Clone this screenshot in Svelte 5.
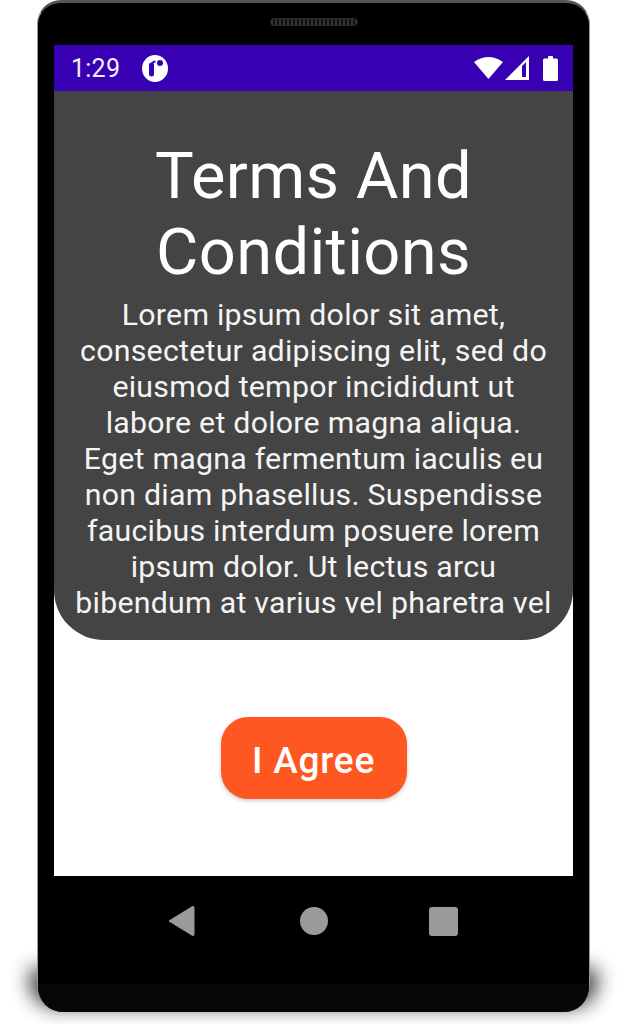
<script>
  const body =
    'Lorem ipsum dolor sit amet, consectetur adipiscing elit, sed do eiusmod tempor incididunt ut labore et dolore magna aliqua. Eget magna fermentum iaculis eu non diam phasellus. Suspendisse faucibus interdum posuere lorem ipsum dolor. Ut lectus arcu bibendum at varius vel pharetra vel'
</script>

<div class="page">
  <div class="phone">
    <div class="shadow"></div>
    <div class="bezel-top">
      <div class="speaker"></div>
    </div>

    <main class="screen">
      <header class="status">
        <span class="time">1:29</span>
        <svg class="app-dot" width="26" height="27" viewBox="0 0 26 27">
          <ellipse cx="13" cy="13.500" rx="13" ry="13.500" fill="#fff" />
          <path d="M9.500 19V10.500a4 4 0 0 1 4-4" fill="none" stroke="#3700b3" stroke-width="2" />
          <path d="M9.500 19V10" fill="none" stroke="#3700b3" stroke-width="5" stroke-linecap="round" />
          <circle cx="18" cy="8" r="3" fill="#3700b3" />
        </svg>
        <span class="spacer"></span>
        <svg width="55" height="26" viewBox="0 0 55 26">
          <path d="M0 7Q14.500-3 29 7L14.500 24Z" fill="#fff" />
          <path d="M31 25 55 1V25ZM48 22H52V7L48 11Z" fill="#fff" fill-rule="evenodd" />
        </svg>
        <svg class="battery" width="15" height="25" viewBox="0 0 15 25">
          <path d="M5 1a1 1 0 0 1 1-1h3a1 1 0 0 1 1 1v1.500h3.500A1.500 1.500 0 0 1 15 4V23.500A1.500 1.500 0 0 1 13.500 25h-12A1.500 1.500 0 0 1 0 23.500V4A1.500 1.500 0 0 1 1.500 2.500H5Z" fill="#fff" />
        </svg>
      </header>

      <section class="terms">
        <h1>Terms And Conditions</h1>
        <p>{body}</p>
      </section>

      <div class="actions">
        <button type="button">I Agree</button>
      </div>
    </main>

    <nav class="nav-bar">
      <svg width="30" height="32" viewBox="0 0 30 32">
        <path d="M2 16 25.500 1.500a1 1 0 0 1 1.500 1v27a1 1 0 0 1-1.500 1Z" fill="#9a9a9a" stroke="#9a9a9a" stroke-width="1" stroke-linejoin="round" />
      </svg>
      <span class="nav-circle"></span>
      <span class="nav-square"></span>
    </nav>

    <div class="chin"></div>
  </div>
</div>

<style>
  :global(body) {
    margin: 0;
    background: #fff;
  }

  .page {
    height: 1024px;
    overflow: hidden;
    padding: 0 37px;
    box-sizing: border-box;
    font-family: Roboto, 'Liberation Sans', sans-serif;
    isolation: isolate;
  }

  .phone {
    position: relative;
    width: 553px;
    height: 1012px;
    box-sizing: border-box;
    padding: 0 16px;
    display: flex;
    flex-direction: column;
    background: #000;
    border: 1px solid #999;
    border-top: 3px solid #555;
    border-bottom: none;
    border-radius: 24px 24px 26px 26px;
  }

  /* soft shadow only round the bottom of the device */
  .shadow {
    position: absolute;
    z-index: -1;
    left: -8px;
    right: -8px;
    bottom: 5px;
    height: 38px;
    border-radius: 0 0 26px 26px;
    background: #000;
    filter: blur(10px);
    opacity: 0.8;
  }

  .bezel-top {
    height: 42px;
    display: flex;
    justify-content: center;
    padding-top: 15px;
    box-sizing: border-box;
  }

  .speaker {
    width: 88px;
    height: 8px;
    box-sizing: border-box;
    border-radius: 4px;
    border: 1px solid #2c2c2c;
    background: repeating-linear-gradient(90deg, #333 0 2px, #111 2px 4px);
  }

  .screen {
    width: 519px;
    height: 831px;
    display: flex;
    flex-direction: column;
    background: #fff;
  }

  .status {
    height: 46px;
    flex: none;
    display: flex;
    align-items: center;
    padding: 0 15px 0 17px;
    box-sizing: border-box;
    background: #3700b3;
    color: #fff;
  }

  .time {
    padding-top: 1px;
    font-size: 25px;
    line-height: 46px;
    letter-spacing: 0.25px;
    color: #f2eefb;
  }

  .app-dot {
    margin-left: 22px;
  }

  .spacer {
    flex: 1;
  }

  .battery {
    margin-left: 14px;
  }

  .terms {
    height: 549px;
    flex: none;
    box-sizing: border-box;
    padding: 47px 20px 0;
    overflow: hidden;
    background: #444;
    border-radius: 0 0 50px 50px;
    color: #fff;
    text-align: center;
  }

  h1 {
    margin: 0;
    padding: 0 40px;
    font-size: 65px;
    line-height: 76px;
    letter-spacing: 0.35px;
    font-weight: 400;
  }

  p {
    margin: 7px 0 0;
    font-size: 30.300px;
    line-height: 36px;
    letter-spacing: 0.25px;
    color: #f4f4f4;
  }

  .actions {
    flex: 1;
    display: flex;
    justify-content: center;
    padding-top: 77px;
  }

  button {
    width: 186px;
    height: 82px;
    padding: 4px 0 0;
    border: 0;
    border-radius: 27px;
    background: #ff5722;
    color: #fff;
    font-family: inherit;
    font-size: 37px;
    font-weight: 500;
    letter-spacing: 0.8px;
    box-shadow: 0 2px 4px rgba(0, 0, 0, 0.2);
  }

  .nav-bar {
    height: 93px;
    flex: none;
    display: flex;
    align-items: center;
    justify-content: center;
    padding: 0 3px 3px 0;
    box-sizing: border-box;
  }

  .nav-circle {
    margin: 0 101px 0 103px;
    width: 28px;
    height: 28px;
    border-radius: 50%;
    background: #9a9a9a;
  }

  .nav-square {
    width: 29px;
    height: 29px;
    border-radius: 3px;
    background: #9a9a9a;
  }

  .chin {
    position: absolute;
    left: 0;
    right: 0;
    bottom: 0;
    height: 28px;
    background: #070707;
    border-radius: 0 0 25px 25px;
  }
</style>
